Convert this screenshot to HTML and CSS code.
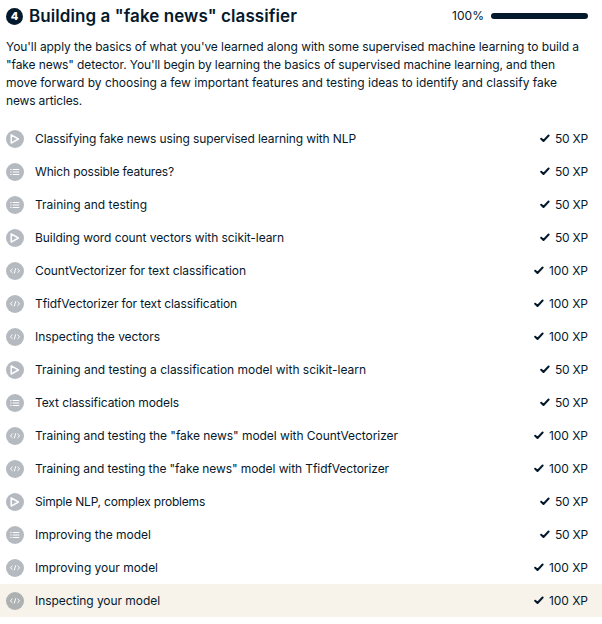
FILE: index.html
```html
<!DOCTYPE html>
<html lang="en">
<head>
<meta charset="utf-8">
<title>Building a "fake news" classifier</title>
<link rel="stylesheet" href="styles.css">
</head>
<body>
<svg class="sprites" aria-hidden="true">
  <symbol id="video" viewBox="0 0 18 18"><path d="M5.2 4.9v8.2L12.4 9z" fill="none" stroke="#fff" stroke-width="1.5" stroke-linejoin="round"/></symbol>
  <symbol id="list" viewBox="0 0 18 18"><path d="M4.3 6.5h1.3M4.3 9h1.3M4.3 11.5h1.3M6.7 6.5h6.6M6.7 9h6.6M6.7 11.5h6.6" fill="none" stroke="#fff" stroke-width="1"/></symbol>
  <symbol id="code" viewBox="0 0 18 18"><path d="M6.5 6.8 4.4 8.8l2.1 2M11.5 6.8l2.1 2-2.1 2M9.7 6.3 8.3 11.3" fill="none" stroke="#fff" stroke-width="1"/></symbol>
  <symbol id="check" viewBox="0 0 10 9"><path d="M1.2 4.7 3.5 7 8.6 1.5" fill="none" stroke="#05192d" stroke-width="2" stroke-linecap="round" stroke-linejoin="round"/></symbol>
</svg>
<main class="chapter">
  <header class="head">
    <span class="number">4</span>
    <h1 class="title"><span data-width="268">Building a "fake news" classifier</span></h1>
    <span class="percent"><span data-width="32">100%</span></span>
    <span class="bar"></span>
  </header>
  <p class="intro">
    <span data-width="573">You'll apply the basics of what you've learned along with some supervised machine learning to build a</span><br>
    <span data-width="549">"fake news" detector. You'll begin by learning the basics of supervised machine learning, and then</span><br>
    <span data-width="551">move forward by choosing a few important features and testing ideas to identify and classify fake</span><br>
    <span data-width="76">news articles.</span>
  </p>
  <ul class="lessons" id="lessons"></ul>
</main>
<script src="script.js"></script>
</body>
</html>
```
FILE: styles.css
```css
body {
  margin: 0;
  background: #fff;
  color: #05192d;
  font: 12px/18px Inter, "Liberation Sans", sans-serif;
}
.sprites { display: none; }
.head {
  display: flex;
  align-items: center;
  height: 32px;
  padding: 0 14px 0 6px;
}
.number {
  width: 17px;
  height: 17px;
  border-radius: 50%;
  background: #05192d;
  color: #fff;
  font-size: 11px;
  font-weight: 800;
  line-height: 17px;
  text-align: center;
}
.title {
  flex: 1;
  margin: 0 0 0 6px;
  font-size: 17px;
  font-weight: 600;
  line-height: 24px;
}
.percent { width: 32px; margin-right: 7px; }
.bar {
  width: 97px;
  height: 6px;
  border-radius: 3px;
  background: #05192d;
}
.intro { margin: 6px 14px 12px 6px; white-space: nowrap; }
.lessons { margin: 0; padding: 0; list-style: none; }
.lesson {
  display: flex;
  align-items: center;
  height: 33px;
  padding: 0 14px 0 6px;
}
.lesson.current { background: #f7f3eb; }
.type {
  width: 18px;
  height: 18px;
  margin-right: 11px;
  border-radius: 50%;
  background: rgba(5, 25, 45, .3);
}
.name { flex: 1; white-space: nowrap; }
.check { width: 10px; height: 9px; margin-right: 5px; }
[data-width] { white-space: nowrap; }
```
FILE: script.js
```js
const lessons = [
  ["video", "Classifying fake news using supervised learning with NLP", 50, 321],
  ["list", "Which possible features?", 50, 139],
  ["list", "Training and testing", 50, 112],
  ["video", "Building word count vectors with scikit-learn", 50, 249],
  ["code", "CountVectorizer for text classification", 100, 211],
  ["code", "TfidfVectorizer for text classification", 100, 202],
  ["code", "Inspecting the vectors", 100, 125],
  ["video", "Training and testing a classification model with scikit-learn", 50, 331],
  ["list", "Text classification models", 50, 144],
  ["code", "Training and testing the \"fake news\" model with CountVectorizer", 100, 363],
  ["code", "Training and testing the \"fake news\" model with TfidfVectorizer", 100, 354],
  ["video", "Simple NLP, complex problems", 50, 170],
  ["list", "Improving the model", 50, 116],
  ["code", "Improving your model", 100, 123],
  ["code", "Inspecting your model", 100, 125]
];

document.getElementById("lessons").innerHTML = lessons.map(([type, name, xp, width], i) => `
  <li class="lesson${i === lessons.length - 1 ? " current" : ""}">
    <svg class="type"><use href="#${type}"/></svg>
    <span class="name"><span data-width="${width}">${name}</span></span>
    <svg class="check"><use href="#check"/></svg>
    <span class="xp"><span data-width="${xp === 50 ? 33 : 39}">${xp} XP</span></span>
  </li>`).join("");

document.querySelectorAll("[data-width]").forEach(el => {
  const slack = el.dataset.width - el.getBoundingClientRect().width;
  el.style.letterSpacing = slack / el.textContent.length + "px";
});
```
